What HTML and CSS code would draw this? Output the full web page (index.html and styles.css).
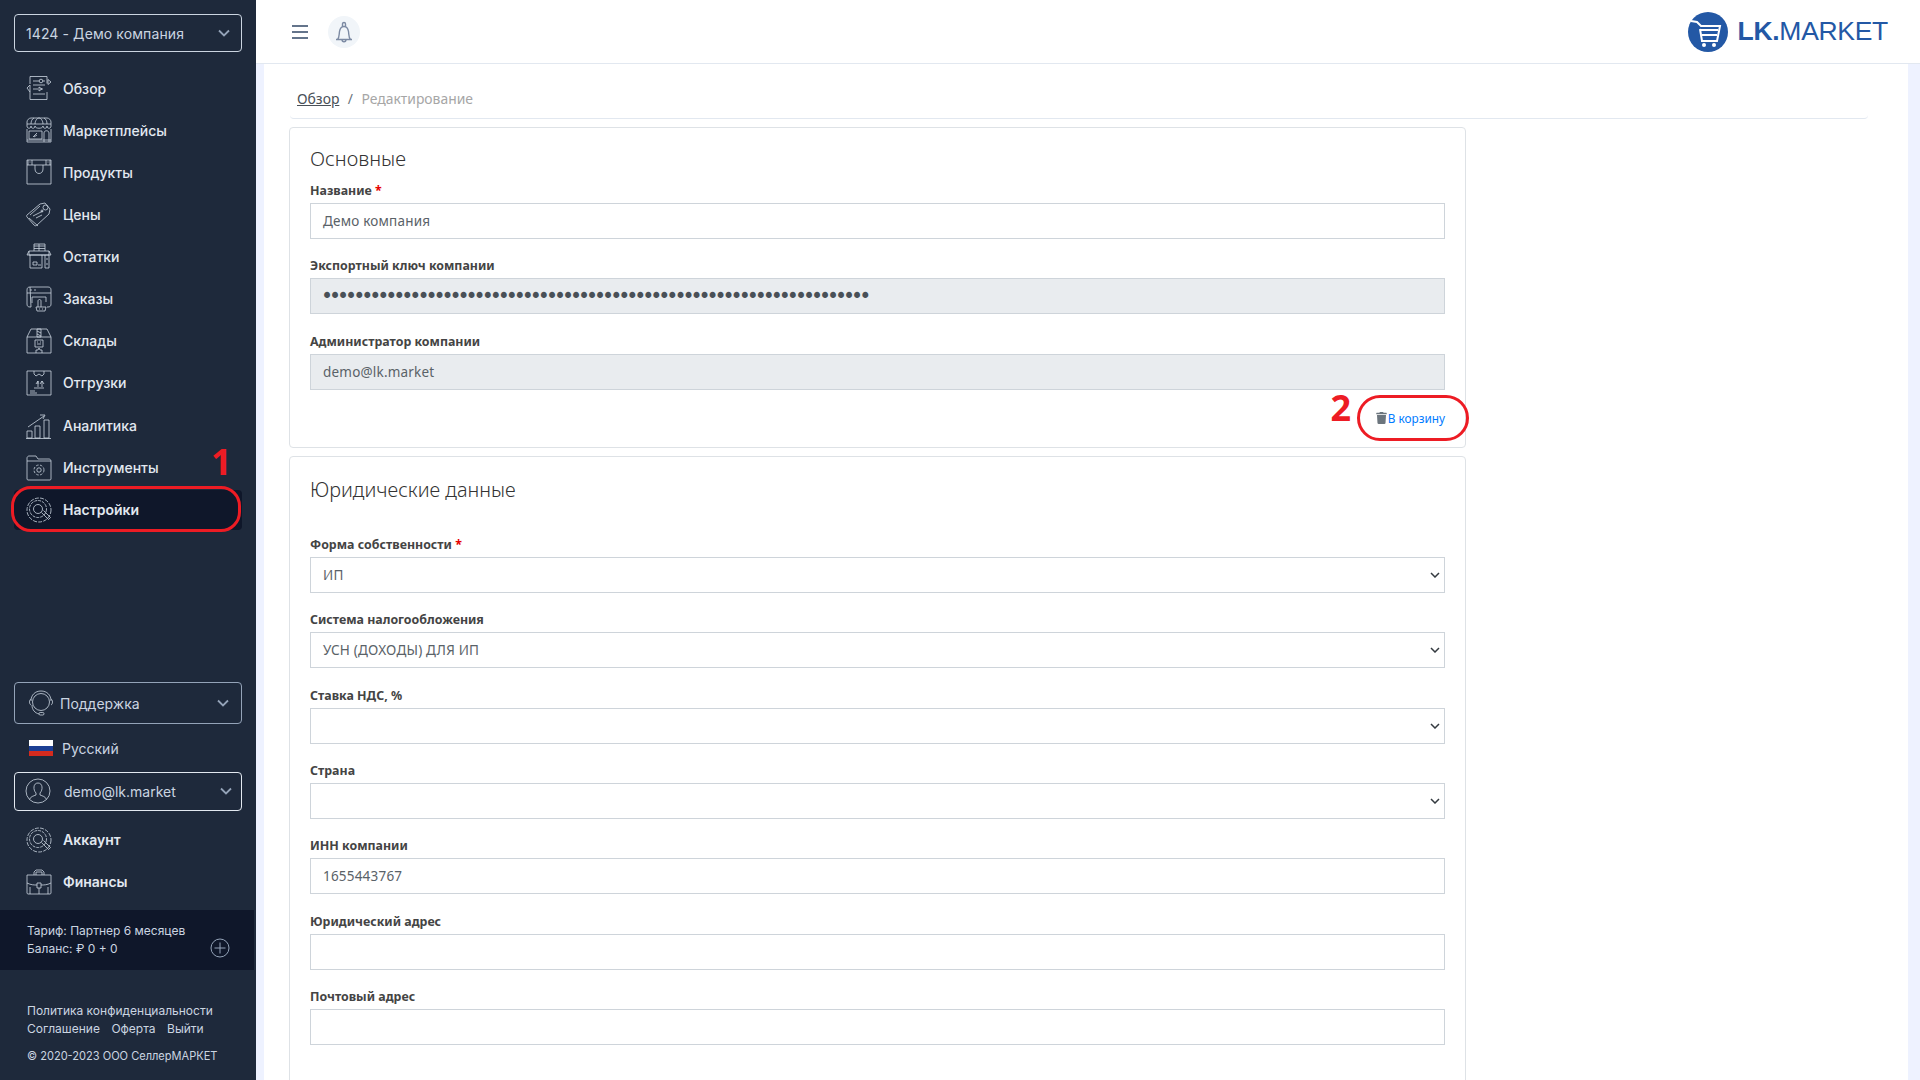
FILE: index.html
```html
<!DOCTYPE html>
<html lang="ru">
<head>
<meta charset="utf-8">
<title>LK.MARKET</title>
<link rel="stylesheet" href="styles.css">
</head>
<body>
<div class="app">
  <aside class="sidebar">
    <div class="side-select company"><span>1424 - Демо компания</span>
      <svg class="chev" viewBox="0 0 12 8"><path d="M1 1.5l5 5 5-5"/></svg></div>
    <nav class="menu">
      <a class="item"><svg class="ico" viewBox="0 0 26 26"><path d="M4 1.5h17v7M21 17v7.500H4V17M4 9V1.500M1 13l3-3v7zM25 7l-3-2.500 0 5zM7 6h6M17 6h2M7 10h12M7 14h5M14 14l3 0M7 19h12"/><circle cx="15" cy="6" r="1.800"/><path d="M13 12l3 2-3 2z"/></svg>Обзор</a>
      <a class="item"><svg class="ico" viewBox="0 0 26 26"><path d="M1 9V5c0-2 2-4 4-4h16c2 0 4 2 4 4v4M1 7h24M1 9c0 3 4 3 4 0 0 3 4 3 4 0 0 3 8 3 8 0 0 3 4 3 4 0 0 3 4 3 4 0M9 7c0-3 2-6 4-6s4 3 4 6M5 7c0-3 1-5 3-6M21 7c0-3-1-5-3-6M1 12v13h24V12M3 14h13v8H3zM18 25V16c0-3 5-3 5 0v9M1 23h24M7 20l4-4M8 20l3-2"/></svg>Маркетплейсы</a>
      <a class="item"><svg class="ico" viewBox="0 0 26 26"><path d="M1 1h24v24H1zM1 6h24M2 1v5M6 1v5M20 1v5M24 1v5M9 6v4c0 6 8 6 8 0V6M3.500 3h1M21.500 3h1"/></svg>Продукты</a>
      <a class="item"><svg class="ico" viewBox="0 0 26 26"><path d="M1 14L14 3l5-1 5 6-1 5L11 24c-1 1-2 1-3 0L1 16c-.5-.7-.5-1.500 0-2zM3 17l9 8M4 14L14 5M7 15l10-5M10 17l6-3"/><circle cx="19.500" cy="6.500" r="2.500"/><circle cx="16" cy="10" r="1"/></svg>Цены</a>
      <a class="item"><svg class="ico" viewBox="0 0 26 26"><path d="M8 8V1h11v7M8 3h11M8 5.500h11M13 1v7M3 8h20v4H3zM1 12l2-4M25 12l-2-4M4 12v13h12V12M19 12v13h4V12M7 19h4v3H7zM12 22h3M21 15v2M21 20v2M1 12h24"/></svg>Остатки</a>
      <a class="item"><svg class="ico" viewBox="0 0 26 26"><path d="M4 1h18c2 0 3 1 3 3v14c0 2-1 3-3 3h-1M5 21H4c-2 0-3-1-3-3V4c0-2 1-3 3-3zM1 7h24M4 4h2M8 4h2M6 11h14v5M6 11v6M10 21h10l-1 4h-8zM12 21v-6c0-2 3-2 3 0v6M13 23h1M16 23h1"/></svg>Заказы</a>
      <a class="item"><svg class="ico" viewBox="0 0 26 26"><path d="M1 9l4-8h16l4 8v16H1zM1 9h24M11 1h4v8h-4zM11 3l4 2M11 6l4 2M9 12h8v7H9zM11 14h1M14 14h1M11 16h4M10 25v-3h2l1-2 1 2h2v3"/></svg>Склады</a>
      <a class="item"><svg class="ico" viewBox="0 0 26 26"><path d="M1 1h24v24H1zM8 1v3l2 2 3-2 3 2 2-2V1M10 14l2-3 0 3M12 11v6M14 14l2-3 2 3M16 11v6M8 18h10M4 21h5M4 23h7"/></svg>Отгрузки</a>
      <a class="item bump"><svg class="ico" viewBox="0 0 26 26"><path d="M1 25v-7h5v7zM9 25V13h5v12zM18 25V7h5v18zM0 25.500h25M2 14L18 3M14 2h5l-2 4"/></svg>Аналитика</a>
      <a class="item"><svg class="ico" viewBox="0 0 26 26"><path d="M1 24V3c0-1 1-2 2-2h7l2 3h11c1 0 2 1 2 2v18c0 .5-.5 1-1 1H2c-.5 0-1-.5-1-1zM1 6h24"/><circle cx="13" cy="15" r="2.200"/><circle cx="13" cy="15" r="5" stroke-dasharray="2.500 1.500"/></svg>Инструменты</a>
      <a class="item active"><svg class="ico" viewBox="0 0 26 26"><circle cx="13" cy="13" r="12" stroke-dasharray="4 1.200"/><circle cx="12" cy="12" r="8.500" stroke-dasharray="3 1"/><circle cx="12" cy="12" r="4.500"/><path d="M15.500 15.500l7 7 2-2-7-7"/></svg>Настройки</a>
    </nav>
    <div class="side-bottom">
      <div class="side-select support"><svg class="ico" viewBox="0 0 26 26"><path d="M3 11C3 5 7 1 13 1s10 4 10 10"/><circle cx="13" cy="12" r="8.500"/><path d="M3 9c-2 1-2 5 0 6M23 9c2 1 2 5 0 6M4 15c0 5 3 8 7 9"/><rect x="11" y="22.500" width="5" height="2.500" rx="1.200"/></svg><span>Поддержка</span>
        <svg class="chev" viewBox="0 0 12 8"><path d="M1 1.500l5 5 5-5"/></svg></div>
      <div class="lang"><span class="flag"><i class="f1"></i><i class="f2"></i><i class="f3"></i></span>Русский</div>
      <div class="side-select user"><svg class="ico" viewBox="0 0 26 26"><circle cx="13" cy="13" r="12"/><path d="M4.500 21.500c1-3 4-3.500 6.500-4.500v-2c-3-3-3-10 2-10s5 7 2 10v2c2.500 1 5.500 1.500 6.500 4.500"/></svg><span>demo@lk.market</span>
        <svg class="chev" viewBox="0 0 12 8"><path d="M1 1.500l5 5 5-5"/></svg></div>
      <nav class="menu sub">
        <a class="item"><svg class="ico" viewBox="0 0 26 26"><circle cx="13" cy="13" r="12" stroke-dasharray="4 1.200"/><circle cx="12" cy="12" r="8.500" stroke-dasharray="3 1"/><circle cx="12" cy="12" r="4.500"/><path d="M15.500 15.500l7 7 2-2-7-7"/></svg>Аккаунт</a>
        <a class="item"><svg class="ico" viewBox="0 0 26 26"><path d="M1 6h24v18c0 .5-.5 1-1 1H2c-.5 0-1-.5-1-1zM8 6V3l2-2h6l2 2v3M10 6V3h6v3M1 14c4 2 7 2 10 2M25 14c-4 2-7 2-10 2M11 14h4v5h-4zM13 19v6M4 18v7M22 18v7"/></svg>Финансы</a>
      </nav>
      <div class="tariff">
        <div class="tariff-text"><div>Тариф: Партнер 6 месяцев</div><div>Баланс: ₽ 0 + 0</div></div>
        <svg class="plus" viewBox="0 0 20 20"><circle cx="10" cy="10" r="9"/><path d="M10 4.500v11M4.500 10h11"/></svg>
      </div>
      <div class="foot">
        <div>Политика конфиденциальности</div>
        <div class="foot-links"><span>Соглашение</span><span>Оферта</span><span>Выйти</span></div>
        <div class="copy">© 2020-2023 ООО СеллерМАРКЕТ</div>
      </div>
    </div>
    <div class="ring ring1"></div>
    <div class="num num1">1</div>
  </aside>
  <div class="main">
    <header class="top">
      <svg class="burger" viewBox="0 0 16 14"><path d="M0 1h16M0 7h16M0 13h16"/></svg>
      <span class="bell"><svg viewBox="0 0 18 22"><path d="M1 18.500h16M2.500 18.500c2-2 1.500-5 2-8 .5-3 2-5 4.500-5s4 2 4.500 5c.5 3 0 6 2 8M7.500 5.500V3c0-2 3-2 3 0v2.500M7 18.500c0 3 4 3 4 0"/></svg></span>
      <div class="logo">
        <svg class="logo-mark" viewBox="0 0 40 40"><circle cx="20" cy="20" r="20" fill="#2358a5"/><path d="M3 9l6 1 4 4h19l-3 15H14l-2-12M13 18h17M14 23h15" fill="none" stroke="#fff" stroke-width="2"/><circle cx="16" cy="33" r="2" fill="#fff"/><circle cx="26" cy="33" r="2" fill="#fff"/></svg>
        <span class="logo-text"><b>LK.</b>MARKET</span>
      </div>
    </header>
    <div class="canvas">
      <div class="panel">
        <div class="crumbs"><a>Обзор</a><span class="sep">/</span><span class="cur">Редактирование</span></div>
        <section class="card first">
          <h2>Основные</h2>
          <div class="field"><label>Название <em>*</em></label><div class="control">Демо компания</div></div>
          <div class="field"><label>Экспортный ключ компании</label><div class="control off dots">••••••••••••••••••••••••••••••••••••••••••••••••••••••••••••••••••••</div></div>
          <div class="field"><label>Администратор компании</label><div class="control off">demo@lk.market</div></div>
          <div class="actions">
            <span class="num num2">2</span>
            <a class="del"><svg viewBox="0 0 448 512"><path d="M432 32H312l-9.400-18.700A24 24 0 0 0 281.100 0H166.800a23.720 23.720 0 0 0-21.400 13.300L136 32H16A16 16 0 0 0 0 48v32a16 16 0 0 0 16 16h416a16 16 0 0 0 16-16V48a16 16 0 0 0-16-16zM53.200 467a48 48 0 0 0 47.900 45h245.800a48 48 0 0 0 47.900-45L416 128H32z"/></svg>В корзину</a>
            <span class="ring ring2"></span>
          </div>
        </section>
        <section class="card second">
          <h2>Юридические данные</h2>
          <div class="field"><label>Форма собственности <em>*</em></label><div class="control sel">ИП<svg viewBox="0 0 10 6"><path d="M1 1l4 4 4-4"/></svg></div></div>
          <div class="field"><label>Система налогообложения</label><div class="control sel">УСН (ДОХОДЫ) ДЛЯ ИП<svg viewBox="0 0 10 6"><path d="M1 1l4 4 4-4"/></svg></div></div>
          <div class="field"><label>Ставка НДС, %</label><div class="control sel"><svg viewBox="0 0 10 6"><path d="M1 1l4 4 4-4"/></svg></div></div>
          <div class="field"><label>Страна</label><div class="control sel"><svg viewBox="0 0 10 6"><path d="M1 1l4 4 4-4"/></svg></div></div>
          <div class="field"><label>ИНН компании</label><div class="control">1655443767</div></div>
          <div class="field"><label>Юридический адрес</label><div class="control"></div></div>
          <div class="field"><label>Почтовый адрес</label><div class="control"></div></div>
        </section>
      </div>
    </div>
  </div>
</div>
</body>
</html>
```
FILE: styles.css
```css
* { box-sizing: border-box; }
html, body { margin: 0; height: 100%; overflow: hidden; }
body { font-family: "Noto Sans", "Open Sans", sans-serif; color: #495057; background: #fff; }
.app { display: flex; height: 1080px; overflow: hidden; }

.sidebar { position: relative; width: 256px; flex: none; background: #1e293b; color: #e2e8f0; font-family: Inter, "Noto Sans", sans-serif; display: flex; flex-direction: column; padding-top: 14px; }
.side-select { display: flex; align-items: center; margin: 0 14px; width: 228px; border: 1px solid #94a3b8; border-radius: 4px; color: #cbd5e1; font-size: 14px; }
.company { height: 38px; padding: 0 11px; justify-content: space-between; border-color: #cbd5e1; letter-spacing: .1px; }
.chev { width: 12px; height: 8px; fill: none; stroke: #94a3b8; stroke-width: 1.800; flex: none; }
.ico { width: 26px; height: 26px; flex: none; fill: none; stroke: #cbd5e1; stroke-width: .8; }
.menu { display: flex; flex-direction: column; margin-top: 15px; padding: 0 14px; }
.item { display: flex; align-items: center; gap: 11px; height: 42.100px; padding-left: 12px; font-size: 14px; font-weight: 500; color: #e2e8f0; }
.item.bump { margin-top: 1px; }
.item.active { background: #0f172a; border-radius: 4px; height: 40px; margin-top: 1px; font-weight: 600; }

.side-bottom { margin-top: auto; display: flex; flex-direction: column; }
.support { height: 42px; padding: 1px 12px 0 13px; gap: 6px; }
.support span, .user span { flex: 1; }
.lang { display: flex; align-items: center; gap: 9px; height: 48px; padding: 1px 0 0 29px; font-size: 14px; color: #cbd5e1; }
.flag { width: 24px; height: 16px; display: flex; flex-direction: column; }
.flag i { flex: 1; }
.f1 { background: #fff; } .f2 { background: #1c3f94; } .f3 { background: #d52b1e; }
.user { height: 39px; padding: 0 9px 0 10px; gap: 13px; border-color: #e2e8f0; }
.sub { margin-top: 8px; }
.sub .item { font-weight: 600; }
.tariff { display: flex; align-items: center; justify-content: space-between; height: 60px; margin-top: 7px; padding: 0 27px; background: #0f172a; width: 254px; font-size: 12px; line-height: 18px; color: #cbd5e1; }
.plus { width: 20px; height: 20px; margin: 15px -3px 0 0; fill: none; stroke: #94a3b8; stroke-width: 1; }
.foot { padding: 32px 10px 15px 27px; font-size: 12px; line-height: 18px; color: #cbd5e1; }
.foot-links { display: flex; gap: 11.500px; }
.copy { margin-top: 9px; font-size: 11.050px; white-space: nowrap; }

.main { flex: 1; min-width: 0; display: flex; flex-direction: column; }
.top { height: 64px; flex: none; display: flex; align-items: center; border-bottom: 1px solid #e2e8f0; padding: 0 32px 0 36px; }
.burger { width: 16px; height: 14px; fill: none; stroke: #64748b; stroke-width: 2; }
.bell { width: 32px; height: 32px; margin-left: 20px; border-radius: 50%; background: #f1f5f9; display: flex; align-items: center; justify-content: center; }
.bell svg { width: 18px; height: 22px; fill: none; stroke: #7c8aa3; stroke-width: 1.400; }
.logo { margin-left: auto; display: flex; align-items: center; gap: 10px; }
.logo-mark { width: 40px; height: 40px; }
.logo-text { font-family: "Liberation Sans", sans-serif; font-size: 26.500px; color: #2358a5; letter-spacing: -.3px; }

.canvas { flex: 1; min-height: 0; background: #eef2ff; padding: 0 12px 0 8px; display: flex; }
.panel { flex: 1; background: #fff; padding: 0 40px 0 25px; overflow: hidden; }
.crumbs { height: 55px; padding: 25px 0 0 7px; margin: 0 0 8px 1px; border-bottom: 1px solid #e2e8f0; border-radius: 0 0 4px 4px; font-size: 13.900px; line-height: 20px; display: flex; }
.crumbs a { color: #495057; text-decoration: underline; }
.sep { margin: 0 8.500px; color: #6c757d; }
.cur { color: #a6a6a6; }

.card { width: 1177px; border: 1px solid #dee2e6; border-radius: 4px; padding: 0 20px; margin-bottom: 8px; }
.first { height: 321px; padding-top: 17px; }
.second { padding: 19px 20px 60px; }
h2 { margin: 0; font-weight: 300; font-size: 20px; line-height: 28px; color: #333; }
.first h2 { height: 35px; }
.second h2 { height: 58px; font-size: 19.800px; }
.field { margin-bottom: 16.330px; }
label { display: block; height: 23px; font-size: 12.400px; line-height: 22px; font-weight: 700; color: #444; }
em { font-style: normal; color: #e60000; }
.control { position: relative; display: flex; align-items: center; height: 36px; padding: 0 12px; border: 1px solid #ced4da; font-size: 13.500px; letter-spacing: .2px; color: #5a6268; }
.off { background: #e9ecef; }
.dots { font-family: "DejaVu Sans", sans-serif; color: #495057; letter-spacing: -4.060px; font-size: 20.500px; padding-left: 10px; }
.sel svg { position: absolute; right: 4px; top: 14px; width: 10px; height: 6px; fill: none; stroke: #343a40; stroke-width: 1.500; }
.actions { position: relative; margin-top: -3px; height: 30px; display: flex; justify-content: flex-end; align-items: center; }
.del { display: flex; align-items: center; gap: 1px; font-size: 11.800px; color: #007bff; }
.del svg { width: 11px; height: 12px; fill: #6c757d; }

.ring { position: absolute; border: 3.500px solid #ed1c24; pointer-events: none; }
.ring1 { left: 11px; top: 486px; width: 230px; height: 46px; border-radius: 20px; }
.ring2 { right: -24px; top: -8px; width: 112px; height: 46px; border-radius: 23px; }
.num { position: absolute; font-family: "Open Sans", sans-serif; font-weight: 700; color: #ed1c24; line-height: 36px; }
.num1 { left: 211px; top: 444px; font-size: 36px; }
.num2 { right: 94px; top: -13px; font-size: 36px; }
```
